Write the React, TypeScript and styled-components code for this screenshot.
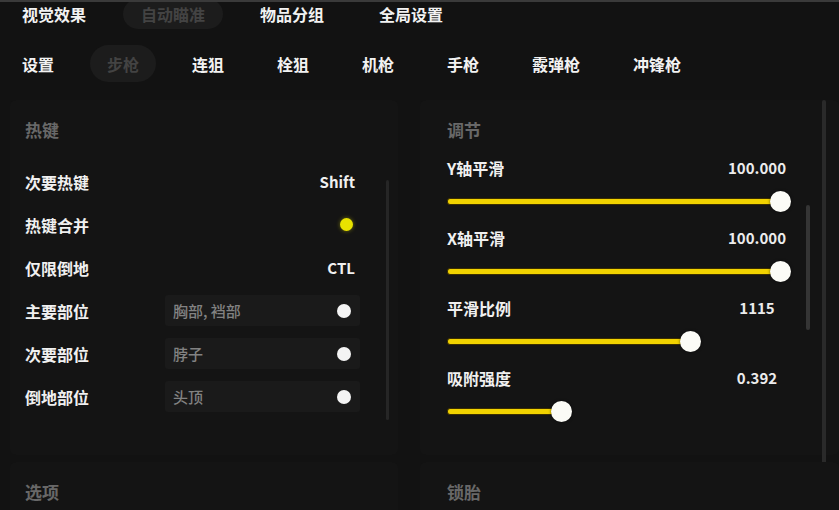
import React from "react";
import styled, { createGlobalStyle } from "styled-components";

const GlobalStyle = createGlobalStyle`
  html, body {
    margin: 0;
    padding: 0;
    background: #121212;
  }
  body {
    font-family: "Noto Sans CJK SC", "Noto Sans", sans-serif;
    overflow: hidden;
  }
`;

const Screen = styled.div`
  width: 839px;
  height: 510px;
  box-sizing: border-box;
  overflow: hidden;
  background: #121212;
  border-top: 2px solid #3a3a3a;
  display: flex;
  flex-direction: column;
`;

const TabRow = styled.div<{ $offset: number; $height: number; $left: number }>`
  display: flex;
  gap: 19px;
  margin-top: ${(p) => p.$offset}px;
  padding-left: ${(p) => p.$left}px;
  height: ${(p) => p.$height}px;
  flex-shrink: 0;
`;

const Tab = styled.div<{ $active?: boolean; $pad: number }>`
  display: flex;
  align-items: center;
  padding: 0 ${(p) => p.$pad}px;
  border-radius: 999px;
  font-size: 16px;
  line-height: 20px;
  font-weight: 700;
  white-space: nowrap;
  color: ${(p) => (p.$active ? "#434343" : "#f2f2f2")};
  background: ${(p) => (p.$active ? "#1c1c1c" : "transparent")};
`;

const Content = styled.div`
  display: flex;
  margin-top: 18px;
  padding-left: 10px;
  flex: 1;
`;

const Column = styled.div<{ $width: number; $gapLeft?: number }>`
  width: ${(p) => p.$width}px;
  margin-left: ${(p) => p.$gapLeft ?? 0}px;
  display: flex;
  flex-direction: column;
  gap: 7px;
`;

const Panel = styled.div<{ $height: number; $padLeft: number }>`
  height: ${(p) => p.$height}px;
  display: flex;
  padding: 18px 0 0 ${(p) => p.$padLeft}px;
  box-sizing: border-box;
  background: #141414;
  border-radius: 6px;
`;

const PanelBody = styled.div<{ $width: number }>`
  width: ${(p) => p.$width}px;
  display: flex;
  flex-direction: column;
`;

const SectionTitle = styled.div<{ $gap?: number }>`
  font-size: 17px;
  line-height: 24px;
  font-weight: 700;
  color: #686868;
  margin-bottom: ${(p) => p.$gap ?? 0}px;
`;

const Scrollbar = styled.div<{
  $left: number;
  $top: number;
  $height: number;
  $width: number;
  $color: string;
}>`
  margin-left: ${(p) => p.$left}px;
  margin-top: ${(p) => p.$top}px;
  width: ${(p) => p.$width}px;
  height: ${(p) => p.$height}px;
  background: ${(p) => p.$color};
  border-radius: 2px;
  flex-shrink: 0;
`;

const Row = styled.div`
  height: 43px;
  display: flex;
  align-items: center;
  justify-content: space-between;
`;

const Label = styled.div`
  font-size: 16px;
  line-height: 20px;
  font-weight: 700;
  color: #f0f0f0;
  white-space: nowrap;
`;

const KeyValue = styled.div`
  font-size: 15px;
  line-height: 20px;
  font-weight: 700;
  color: #f0f0f0;
  padding-right: 5px;
`;

const Dot = styled.div`
  width: 13px;
  height: 13px;
  border-radius: 50%;
  margin-right: 7px;
  background: #e8e200;
  box-shadow: 0 0 4px rgba(232, 226, 0, 0.45);
`;

const Select = styled.div`
  width: 195px;
  height: 31px;
  box-sizing: border-box;
  display: flex;
  align-items: center;
  justify-content: space-between;
  padding: 0 9px 0 8px;
  background: #1a1a1a;
  border-radius: 3px;
`;

const SelectText = styled.span`
  font-size: 15px;
  line-height: 20px;
  font-weight: 500;
  color: #828282;
`;

const Knob = styled.div`
  width: 14px;
  height: 14px;
  border-radius: 50%;
  background: #f4f4f4;
`;

const SliderBlock = styled.div`
  display: flex;
  flex-direction: column;
  margin-bottom: 14px;
`;

const SliderHeader = styled.div`
  height: 20px;
  display: flex;
  align-items: center;
  justify-content: space-between;
`;

const SliderValue = styled.div`
  width: 80px;
  margin-right: -4px;
  text-align: center;
  font-size: 15px;
  line-height: 20px;
  font-weight: 700;
  color: #ececec;
`;

const TrackArea = styled.div`
  height: 26px;
  margin-top: 10px;
  width: 333px;
  display: flex;
  align-items: center;
`;

const Fill = styled.div`
  height: 7px;
  flex-shrink: 0;
  box-sizing: border-box;
  background: #f1d200;
  border: 1px solid #3a2d00;
  border-radius: 3px;
`;

const Thumb = styled.div`
  width: 21px;
  height: 21px;
  margin-left: -10px;
  border-radius: 50%;
  background: #fbfbf6;
  box-shadow: 0 0 3px rgba(0, 0, 0, 0.6);
  flex-shrink: 0;
`;

const topTabs = [
  { label: "视觉效果" },
  { label: "自动瞄准", active: true },
  { label: "物品分组" },
  { label: "全局设置" },
];

const weaponTabs = [
  { label: "设置" },
  { label: "步枪", active: true },
  { label: "连狙" },
  { label: "栓狙" },
  { label: "机枪" },
  { label: "手枪" },
  { label: "霰弹枪" },
  { label: "冲锋枪" },
];

const sliders = [
  { label: "Y轴平滑", value: "100.000", pct: 100 },
  { label: "X轴平滑", value: "100.000", pct: 100 },
  { label: "平滑比例", value: "1115", pct: 73 },
  { label: "吸附强度", value: "0.392", pct: 34.2 },
];

const parts = [
  { label: "主要部位", value: "胸部, 裆部" },
  { label: "次要部位", value: "脖子" },
  { label: "倒地部位", value: "头顶" },
];

export default function App() {
  return (
    <>
      <GlobalStyle />
      <Screen>
        <TabRow $offset={-3} $height={30} $left={4}>
          {topTabs.map((t) => (
            <Tab key={t.label} $active={t.active} $pad={18}>
              {t.label}
            </Tab>
          ))}
        </TabRow>
        <TabRow $offset={16} $height={37} $left={5}>
          {weaponTabs.map((t) => (
            <Tab key={t.label} $active={t.active} $pad={17}>
              {t.label}
            </Tab>
          ))}
        </TabRow>

        <Content>
          <Column $width={388}>
            <Panel $height={355} $padLeft={15}>
              <PanelBody $width={335}>
                <SectionTitle $gap={18}>热键</SectionTitle>
                <Row>
                  <Label>次要热键</Label>
                  <KeyValue>Shift</KeyValue>
                </Row>
                <Row>
                  <Label>热键合并</Label>
                  <Dot />
                </Row>
                <Row>
                  <Label>仅限倒地</Label>
                  <KeyValue>CTL</KeyValue>
                </Row>
                {parts.map((p) => (
                  <Row key={p.label}>
                    <Label>{p.label}</Label>
                    <Select>
                      <SelectText>{p.value}</SelectText>
                      <Knob />
                    </Select>
                  </Row>
                ))}
              </PanelBody>
              <Scrollbar $left={26} $top={62} $height={240} $width={3} $color="#262626" />
            </Panel>
            <Panel $height={60} $padLeft={15}>
              <SectionTitle>选项</SectionTitle>
            </Panel>
          </Column>

          <Column $width={419} $gapLeft={22}>
            <Panel $height={355} $padLeft={27}>
              <PanelBody $width={346}>
                <SectionTitle $gap={16}>调节</SectionTitle>
                {sliders.map((s) => (
                  <SliderBlock key={s.label}>
                    <SliderHeader>
                      <Label>{s.label}</Label>
                      <SliderValue>{s.value}</SliderValue>
                    </SliderHeader>
                    <TrackArea>
                      <Fill style={{ width: `${s.pct}%` }} />
                      <Thumb />
                    </TrackArea>
                  </SliderBlock>
                ))}
              </PanelBody>
              <Scrollbar $left={13} $top={87} $height={125} $width={4} $color="#353535" />
              <Scrollbar $left={12} $top={-18} $height={370} $width={4} $color="#2a2a2a" />
            </Panel>
            <Panel $height={60} $padLeft={27}>
              <SectionTitle>锁胎</SectionTitle>
            </Panel>
          </Column>
        </Content>
      </Screen>
    </>
  );
}
